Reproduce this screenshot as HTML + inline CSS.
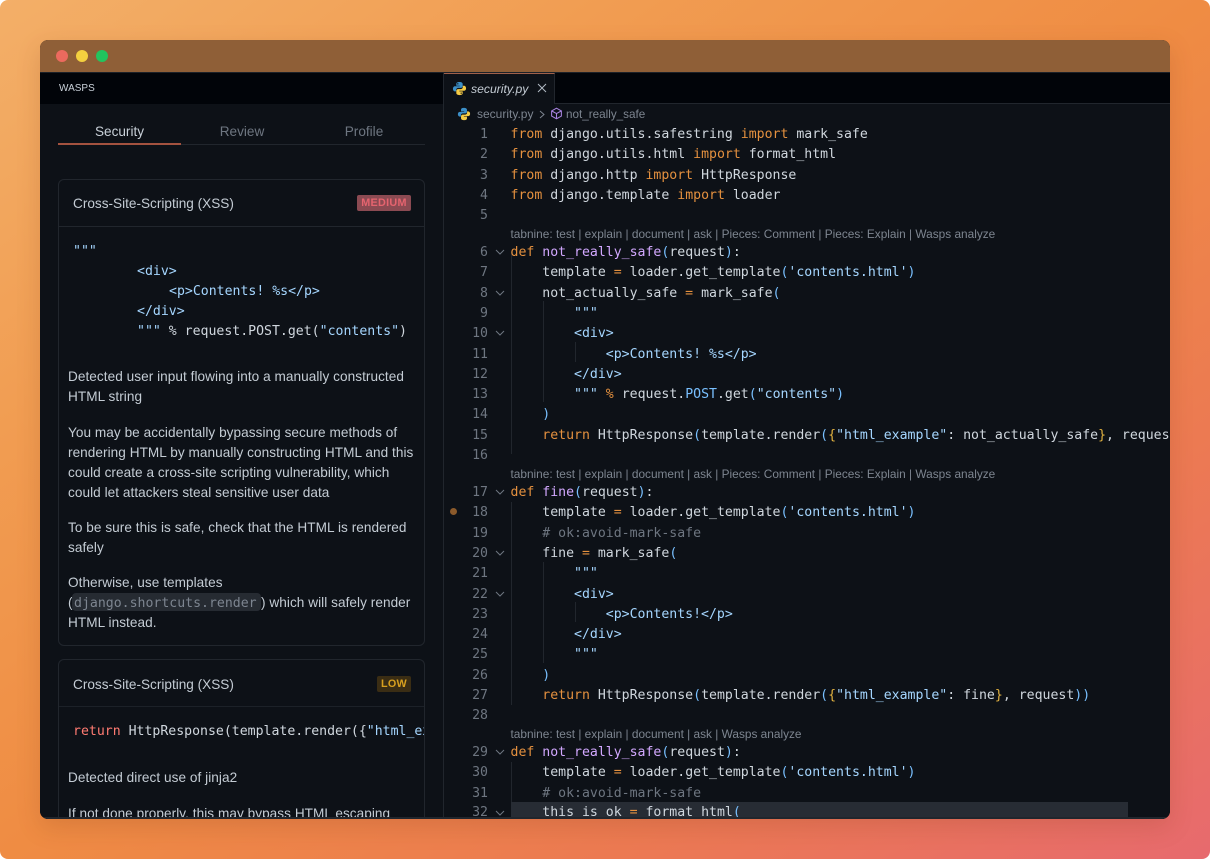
<!DOCTYPE html>
<html><head><meta charset="utf-8"><style>
*{box-sizing:border-box;margin:0;padding:0}
html,body{width:1210px;height:859px;overflow:hidden;background:#fff}
#bg{position:absolute;left:0;top:0;width:1210px;height:859px;border-radius:8px;overflow:hidden;background:linear-gradient(to bottom right,#f3af68 0%,#f19d52 25%,#ef8c43 50%,#ec7a52 75%,#e76a6e 100%)}
#win{position:absolute;left:40px;top:40px;width:1130px;height:779px;border-radius:8px;overflow:hidden;background:#0d1117;box-shadow:0 8px 24px rgba(120,50,20,.18)}
#bar{position:absolute;left:0;top:0;width:1130px;height:32px;background:#8f5f37}
.dot{position:absolute;top:10px;width:12px;height:12px;border-radius:50%}
#side{position:absolute;left:0;top:32px;width:403px;height:747px;background:#0d1117;overflow:hidden;border-top:1px solid #1c2128}
#sh{position:absolute;left:0;top:0;width:403px;height:31px;background:#010409}
.s,.a{position:absolute;white-space:nowrap;font-family:"Liberation Sans",sans-serif}
.a{font-size:13.6px;color:#c4ccd4;line-height:20px;letter-spacing:.05px;margin-top:1px}
#ed{position:absolute;left:403px;top:32px;width:727px;height:747px;background:#0d1117;overflow:hidden;border-left:1px solid #21262d;border-top:1px solid #1c2128}
#tabs{position:absolute;left:0;top:0;width:727px;height:31px;background:#010409;border-bottom:1px solid #21262d}
#tab{position:absolute;left:0;top:0;width:111px;height:31px;background:#0d1117;border-right:1px solid #21262d;border-top:1px solid #a0604a}
.l,.m{position:absolute;white-space:pre;font-family:"DejaVu Sans Mono","Liberation Mono",monospace;font-size:13.2px;line-height:20px;color:#d0d7de;margin-top:2px}
.l{left:66.5px}
.n{position:absolute;width:44px;left:0;text-align:right;font-family:"DejaVu Sans Mono","Liberation Mono",monospace;font-size:13.2px;line-height:20px;color:#6e7681;margin-top:2px}
.lens{position:absolute;left:66.5px;white-space:nowrap;font-family:"Liberation Sans",sans-serif;font-size:11.85px;line-height:14px;color:#7d8590;margin-top:1px}
.f{position:absolute;left:51px;width:10px;height:10px;margin-top:1px}
.g{position:absolute;width:1px;background:#21262d}
i{font-style:normal}
.o{color:#e5913f}.p{color:#d2a8ff}.b{color:#79c0ff}.t{color:#a5d6ff}.y{color:#e3b341}.c{color:#6e7681}
.r{color:#ff7b72}
</style></head><body>
<div id="bg">
<div id="win">
<div id="bar">
<div class="dot" style="left:16px;background:#ec6a5e"></div>
<div class="dot" style="left:36px;background:#f4d03f"></div>
<div class="dot" style="left:56px;background:#22c55e"></div>
</div>
<div id="side">
<div id="sh"></div>
<div class="s" style="left:19px;top:9px;font-size:10px;line-height:14px;color:#c9d1d9">WASPS</div>
<div class="s" style="left:18px;top:49px;width:123px;text-align:center;font-size:13.6px;line-height:20px;color:#c9d1d9">Security</div>
<div class="s" style="left:141px;top:49px;width:122px;text-align:center;font-size:13.6px;line-height:20px;color:#6e7681">Review</div>
<div class="s" style="left:263px;top:49px;width:122px;text-align:center;font-size:13.6px;line-height:20px;color:#6e7681">Profile</div>
<div style="position:absolute;left:19px;top:71px;width:366px;height:1px;background:#21262d"></div>
<div style="position:absolute;left:18px;top:70px;width:123px;height:2px;background:#a3523f"></div>

<div style="position:absolute;left:18px;top:106px;width:367px;height:467px;border:1px solid #21262d;border-radius:6px"></div>
<div style="position:absolute;left:19px;top:153px;width:365px;height:1px;background:#21262d"></div>
<div class="s" style="left:33px;top:121px;font-size:13.6px;line-height:20px;color:#c4ccd4">Cross-Site-Scripting (XSS)</div>
<div class="s" style="left:317px;top:122px;width:54px;height:16px;border-radius:2px;background:#8b4a52;color:#e5646f;font-size:10.8px;font-weight:bold;line-height:16px;text-align:center;letter-spacing:.3px">MEDIUM</div>

<div class="m t" style="left:33px;top:167px">"""</div>
<div class="m t" style="left:97px;top:187px">&lt;div&gt;</div>
<div class="m t" style="left:129px;top:207px">&lt;p&gt;Contents! %s&lt;/p&gt;</div>
<div class="m t" style="left:97px;top:227px">&lt;/div&gt;</div>
<div class="m" style="left:97px;top:247px"><i class="t">"""</i> % request.POST.get(<i class="t">"contents"</i>)</div>

<div class="a" style="left:28px;top:293px">Detected user input flowing into a manually constructed</div>
<div class="a" style="left:28px;top:313px">HTML string</div>
<div class="a" style="left:28px;top:349px">You may be accidentally bypassing secure methods of</div>
<div class="a" style="left:28px;top:369px">rendering HTML by manually constructing HTML and this</div>
<div class="a" style="left:28px;top:389px">could create a cross-site scripting vulnerability, which</div>
<div class="a" style="left:28px;top:409px">could let attackers steal sensitive user data</div>
<div class="a" style="left:28px;top:444px">To be sure this is safe, check that the HTML is rendered</div>
<div class="a" style="left:28px;top:464px">safely</div>
<div class="a" style="left:28px;top:499px">Otherwise, use templates</div>
<div class="a" style="left:28px;top:519px">(</div>
<div class="m" style="left:32px;top:520px;margin-top:0;width:189px;height:18px;line-height:22px;background:#262b32;border-radius:4px;padding-left:2px;color:#7d8590;font-size:13.2px">django.shortcuts.render</div>
<div class="a" style="left:221px;top:519px">) which will safely render</div>
<div class="a" style="left:28px;top:539px">HTML instead.</div>

<div style="position:absolute;left:18px;top:586px;width:367px;height:161px;border:1px solid #21262d;border-bottom:none;border-radius:6px 6px 0 0"></div>
<div style="position:absolute;left:19px;top:633px;width:365px;height:1px;background:#1c2128"></div>
<div class="s" style="left:33px;top:602px;font-size:13.6px;line-height:20px;color:#c4ccd4">Cross-Site-Scripting (XSS)</div>
<div class="s" style="left:337px;top:603px;width:34px;height:16px;border-radius:2px;background:#3a2d14;color:#d8a01f;font-size:10.8px;font-weight:bold;line-height:16px;text-align:center;letter-spacing:.3px">LOW</div>
<div style="position:absolute;left:33px;top:649px;width:351px;height:20px;overflow:hidden"><div class="m" style="left:0;top:0;margin-top:0"><i class="r">return</i> HttpResponse(template.render({<i class="t">"html_example"</i>: not_actually_safe})</div></div>
<div class="a" style="left:28px;top:694px">Detected direct use of jinja2</div>
<div class="a" style="left:28px;top:730px;height:17px;overflow:hidden">If not done properly, this may bypass HTML escaping</div>
</div>

<div id="ed">
<div id="tabs"></div>
<div id="tab"></div>
<svg style="position:absolute;left:8px;top:8px" width="15" height="15" viewBox="0 0 16 16"><path fill="#3c8fc7" d="M8 1C5 1 4.6 2.2 4.6 3.2V5h3.6v.6H3.200C1.900 5.600 1 6.700 1 8.200s.9 2.800 2.200 2.800h1.300V9.300C4.500 8 5.600 7.300 6.800 7.300h2.700c1 0 1.900-.8 1.900-1.900V3.200C11.400 1.800 10 1 8 1zM6.200 2.300a.7.7 0 1 1 0 1.400.7.7 0 0 1 0-1.400z"/><path fill="#f5cb45" d="M8 15c3 0 3.400-1.200 3.400-2.200V11H7.800v-.6h5c1.300 0 2.200-1.100 2.200-2.600s-.9-2.800-2.200-2.800h-1.300v1.700c0 1.300-1.100 2-2.300 2H6.500c-1 0-1.900.8-1.900 1.900v2.200C4.600 14.200 6 15 8 15zm1.800-1.300a.7.7 0 1 1 0-1.400.7.7 0 0 1 0 1.400z"/></svg>
<div class="s" style="left:27px;top:8px;font-size:12.2px;line-height:16px;font-style:italic;color:#c4ccd4">security.py</div>
<svg style="position:absolute;left:93px;top:10px" width="10" height="10" viewBox="0 0 10 10"><path d="M1 1l8 8M9 1l-8 8" stroke="#b1bac4" stroke-width="1" fill="none"/></svg>

<svg style="position:absolute;left:13px;top:34px" width="14" height="14" viewBox="0 0 16 16"><path fill="#3c8fc7" d="M8 1C5 1 4.600 2.200 4.600 3.200V5h3.600v.6H3.200C1.900 5.600 1 6.700 1 8.200s.9 2.800 2.200 2.800h1.300V9.300C4.500 8 5.600 7.300 6.800 7.300h2.700c1 0 1.900-.8 1.900-1.900V3.200C11.400 1.800 10 1 8 1z"/><path fill="#f5cb45" d="M8 15c3 0 3.400-1.200 3.400-2.200V11H7.800v-.6h5c1.300 0 2.200-1.100 2.200-2.600s-.9-2.800-2.200-2.800h-1.300v1.700c0 1.300-1.100 2-2.300 2H6.500c-1 0-1.900.8-1.900 1.900v2.200C4.600 14.200 6 15 8 15z"/></svg>
<div class="s" style="left:33px;top:34px;font-size:12px;line-height:15px;color:#7d8590">security.py</div>
<svg style="position:absolute;left:95px;top:37px" width="6" height="9" viewBox="0 0 6 9"><path d="M1 1l4 3.500-4 3.500" stroke="#7d8590" fill="none"/></svg>
<svg style="position:absolute;left:106px;top:34px" width="13" height="13" viewBox="0 0 16 16"><path d="M8 1.500l6 3.300v6.400l-6 3.300-6-3.300V4.800zM2 4.800l6 3.300 6-3.300M8 8.100v6.400" stroke="#a883e0" stroke-width="1.300" fill="none"/></svg>
<div class="s" style="left:122px;top:34px;font-size:11.7px;line-height:15px;color:#7d8590">not_really_safe</div>

<div class="g" style="left:67px;top:178px;height:203px"></div>
<div class="g" style="left:99px;top:228px;height:101px"></div>
<div class="g" style="left:131px;top:269px;height:20px"></div>
<div class="g" style="left:67px;top:429px;height:203px"></div>
<div class="g" style="left:99px;top:489px;height:101px"></div>
<div class="g" style="left:131px;top:529px;height:20px"></div>
<div class="g" style="left:67px;top:689px;height:60px"></div>
<div style="position:absolute;left:67px;top:729px;width:617px;height:18px;background:#272c34"></div>

<div class="n" style="top:50px">1</div><div class="l" style="top:50px"><i class="o">from</i> django.utils.safestring <i class="o">import</i> mark_safe</div>
<div class="n" style="top:70px">2</div><div class="l" style="top:70px"><i class="o">from</i> django.utils.html <i class="o">import</i> format_html</div>
<div class="n" style="top:90.500px">3</div><div class="l" style="top:90.500px"><i class="o">from</i> django.http <i class="o">import</i> HttpResponse</div>
<div class="n" style="top:111px">4</div><div class="l" style="top:111px"><i class="o">from</i> django.template <i class="o">import</i> loader</div>
<div class="n" style="top:131px">5</div>
<div class="lens" style="top:153px">tabnine: test | explain | document | ask | Pieces: Comment | Pieces: Explain | Wasps analyze</div>
<div class="n" style="top:168px">6</div><div class="l" style="top:168px"><i class="o">def</i> <i class="p">not_really_safe</i><i class="b">(</i>request<i class="b">)</i>:</div>
<div class="n" style="top:188px">7</div><div class="l" style="top:188px">    template <i class="o">=</i> loader.get_template<i class="b">(</i><i class="t">'contents.html'</i><i class="b">)</i></div>
<div class="n" style="top:208.500px">8</div><div class="l" style="top:208.500px">    not_actually_safe <i class="o">=</i> mark_safe<i class="b">(</i></div>
<div class="n" style="top:229px">9</div><div class="l t" style="top:229px">        """</div>
<div class="n" style="top:249px">10</div><div class="l t" style="top:249px">        &lt;div&gt;</div>
<div class="n" style="top:269.500px">11</div><div class="l t" style="top:269.500px">            &lt;p&gt;Contents! %s&lt;/p&gt;</div>
<div class="n" style="top:290px">12</div><div class="l t" style="top:290px">        &lt;/div&gt;</div>
<div class="n" style="top:310px">13</div><div class="l" style="top:310px"><i class="t">        """</i> <i class="o">%</i> request.<i class="b">POST</i>.get<i class="b">(</i><i class="t">"contents"</i><i class="b">)</i></div>
<div class="n" style="top:330px">14</div><div class="l" style="top:330px"><i class="b">    )</i></div>
<div class="n" style="top:350.500px">15</div><div class="l" style="top:350.500px">    <i class="o">return</i> HttpResponse<i class="b">(</i>template.render<i class="b">(</i><i class="y">{</i><i class="t">"html_example"</i>: not_actually_safe<i class="y">}</i>, request<i class="b">))</i></div>
<div class="n" style="top:371px">16</div>
<div class="lens" style="top:393px">tabnine: test | explain | document | ask | Pieces: Comment | Pieces: Explain | Wasps analyze</div>
<div class="n" style="top:408px">17</div><div class="l" style="top:408px"><i class="o">def</i> <i class="p">fine</i><i class="b">(</i>request<i class="b">)</i>:</div>
<div style="position:absolute;left:6px;top:435px;width:7px;height:7px;border-radius:50%;background:#8b5a2b"></div>
<div class="n" style="top:428px">18</div><div class="l" style="top:428px">    template <i class="o">=</i> loader.get_template<i class="b">(</i><i class="t">'contents.html'</i><i class="b">)</i></div>
<div class="n" style="top:448.500px">19</div><div class="l c" style="top:448.500px">    # ok:avoid-mark-safe</div>
<div class="n" style="top:469px">20</div><div class="l" style="top:469px">    fine <i class="o">=</i> mark_safe<i class="b">(</i></div>
<div class="n" style="top:489px">21</div><div class="l t" style="top:489px">        """</div>
<div class="n" style="top:509.500px">22</div><div class="l t" style="top:509.500px">        &lt;div&gt;</div>
<div class="n" style="top:530px">23</div><div class="l t" style="top:530px">            &lt;p&gt;Contents!&lt;/p&gt;</div>
<div class="n" style="top:550px">24</div><div class="l t" style="top:550px">        &lt;/div&gt;</div>
<div class="n" style="top:570px">25</div><div class="l t" style="top:570px">        """</div>
<div class="n" style="top:590.500px">26</div><div class="l" style="top:590.500px"><i class="b">    )</i></div>
<div class="n" style="top:611px">27</div><div class="l" style="top:611px">    <i class="o">return</i> HttpResponse<i class="b">(</i>template.render<i class="b">(</i><i class="y">{</i><i class="t">"html_example"</i>: fine<i class="y">}</i>, request<i class="b">))</i></div>
<div class="n" style="top:631px">28</div>
<div class="lens" style="top:653px">tabnine: test | explain | document | ask | Wasps analyze</div>
<div class="n" style="top:668px">29</div><div class="l" style="top:668px"><i class="o">def</i> <i class="p">not_really_safe</i><i class="b">(</i>request<i class="b">)</i>:</div>
<div class="n" style="top:688px">30</div><div class="l" style="top:688px">    template <i class="o">=</i> loader.get_template<i class="b">(</i><i class="t">'contents.html'</i><i class="b">)</i></div>
<div class="n" style="top:708.500px">31</div><div class="l c" style="top:708.500px">    # ok:avoid-mark-safe</div>
<div class="n" style="top:728px">32</div><div class="l" style="top:728px">    this_is_ok <i class="o">=</i> format_html<i class="b">(</i></div>

<svg class="f" style="top:173px" viewBox="0 0 10 10"><path d="M1 3l4 4 4-4" stroke="#6e7681" fill="none"/></svg>
<svg class="f" style="top:214px" viewBox="0 0 10 10"><path d="M1 3l4 4 4-4" stroke="#6e7681" fill="none"/></svg>
<svg class="f" style="top:254px" viewBox="0 0 10 10"><path d="M1 3l4 4 4-4" stroke="#6e7681" fill="none"/></svg>
<svg class="f" style="top:413px" viewBox="0 0 10 10"><path d="M1 3l4 4 4-4" stroke="#6e7681" fill="none"/></svg>
<svg class="f" style="top:474px" viewBox="0 0 10 10"><path d="M1 3l4 4 4-4" stroke="#6e7681" fill="none"/></svg>
<svg class="f" style="top:515px" viewBox="0 0 10 10"><path d="M1 3l4 4 4-4" stroke="#6e7681" fill="none"/></svg>
<svg class="f" style="top:673px" viewBox="0 0 10 10"><path d="M1 3l4 4 4-4" stroke="#6e7681" fill="none"/></svg>
<svg class="f" style="top:734px" viewBox="0 0 10 10"><path d="M1 3l4 4 4-4" stroke="#6e7681" fill="none"/></svg>
</div>
<div style="position:absolute;left:0;top:777px;width:1130px;height:2px;background:#21262d"></div>
</div>
</div>
</body></html>
